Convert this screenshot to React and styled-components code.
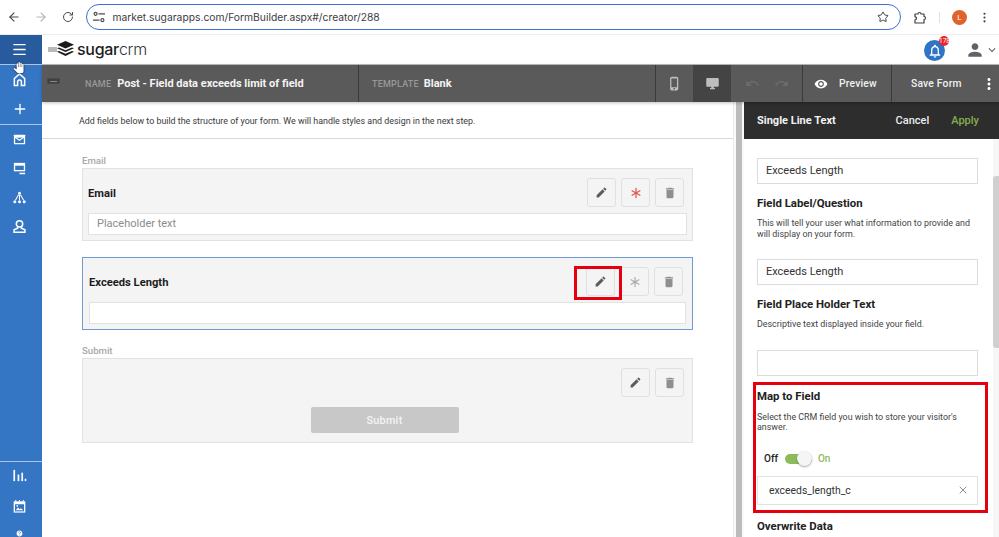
import styled, { createGlobalStyle } from "styled-components";
import { ArrowLeft, ArrowRight, RotateCw, Star, MoreVertical, Plus, X, Asterisk, Menu } from "lucide-react";
import {
  MdEdit,
  MdDelete,
  MdVisibility,
  MdUndo,
  MdRedo,
  MdPhoneIphone,
  MdDesktopWindows,
  MdOutlineNotifications,
  MdPerson,
  MdExpandMore,
  MdMoreVert,
  MdHelp,
  MdPanTool,
} from "react-icons/md";

const Global = createGlobalStyle`
  html, body { margin: 0; padding: 0; background: #fff; overflow: hidden; }
  * { box-sizing: border-box; }
  body { font-family: Roboto, "Liberation Sans", sans-serif; color: #222; }
`;

const Page = styled.div`
  width: 999px;
  height: 537px;
  display: flex;
  flex-direction: column;
  overflow: hidden;
  position: relative;
`;

/* browser chrome */
const BrowserBar = styled.div`
  height: 35px;
  flex: none;
  display: flex;
  align-items: center;
  background: #fff;
  border-bottom: 1px solid #ececec;
`;

const NavBtn = styled.div`
  width: 27px;
  display: flex;
  justify-content: center;
  color: ${({ $dim }) => ($dim ? "#b4b8bd" : "#4a4d52")};
`;

const UrlBar = styled.div`
  width: 815px;
  height: 26px;
  margin-left: 5px;
  border: 1.5px solid #3b6fd0;
  border-radius: 13px;
  display: flex;
  align-items: center;
  padding: 0 11px 0 5px;
  gap: 6.5px;
  font-family: Inter, Roboto, sans-serif;
  font-size: 10.3px;
  color: #3c4043;
`;

const UrlText = styled.span`
  flex: 1;
`;

const BrowserTools = styled.div`
  flex: 1;
  display: flex;
  align-items: center;
  padding-left: 13px;
  color: #3c4043;
`;

const Divider = styled.div`
  width: 1px;
  height: 11px;
  background: #d6e2f5;
  margin: 0 12px;
`;

const Avatar = styled.div`
  width: 15px;
  height: 15px;
  border-radius: 50%;
  background: #e0622c;
  color: #fff;
  font-size: 8px;
  display: flex;
  align-items: center;
  justify-content: center;
  margin-right: 11px;
`;

/* app */
const Shell = styled.div`
  flex: 1;
  display: flex;
  min-height: 0;
`;

const SideNav = styled.nav`
  width: 42px;
  flex: none;
  background: #3476c4;
  display: flex;
  flex-direction: column;
  color: #fff;
`;

const SideTop = styled.div`
  height: 30px;
  flex: none;
  background: #275b9e;
  border-bottom: 1px solid #a9c6ea;
  padding-right: 3px;
  display: flex;
  align-items: center;
  justify-content: center;
`;

const SideGroup = styled.div`
  display: flex;
  flex-direction: column;
  align-items: center;
  flex: none;
  padding: ${({ $top }) => $top || 0}px 3px 0 0;
  height: ${({ $h }) => $h}px;
  border-top: ${({ $line }) => ($line ? "1px solid #a9c6ea" : "none")};
  gap: ${({ $gap }) => $gap || 0}px;
`;

const SideIcon = styled.svg`
  width: 15px;
  height: 15px;
  flex: none;
  fill: none;
  stroke: #fff;
  stroke-width: 1.6;
`;

const Cursor = styled.div`
  position: absolute;
  left: 13px;
  top: 62px;
  color: #fff;
  filter: drop-shadow(0 0 1px #111);
  line-height: 0;
`;

const Main = styled.div`
  flex: 1;
  min-width: 0;
  display: flex;
  flex-direction: column;
`;

const TopHeader = styled.header`
  height: 30px;
  flex: none;
  display: flex;
  align-items: center;
  padding: 0 0 0 6px;
  background: #fff;
  border-bottom: 1px solid #bdbdbd;
`;

const LogoWrap = styled.div`
  display: flex;
  align-items: center;
  flex: 1;
`;

const LogoTag = styled.span`
  width: 9px;
  height: 5px;
  background: #b9b9b9;
  margin-right: -1px;
`;

const LogoText = styled.span`
  font-family: Inter, Roboto, sans-serif;
  font-size: 16px;
  font-weight: 500;
  letter-spacing: -0.3px;
  color: #1d1d1d;
  margin-left: 2px;
  margin-top: -2px;
`;

const LogoLight = styled.span`
  font-weight: 300;
  color: #333;
`;

const Bell = styled.div`
  position: relative;
  width: 21px;
  height: 21px;
  border-radius: 50%;
  background: #2f74c6;
  color: #fff;
  display: flex;
  align-items: center;
  justify-content: center;
  margin-right: 20px;
  margin-top: 2px;
`;

const BellBadge = styled.span`
  position: absolute;
  top: -4px;
  right: -4px;
  width: 10px;
  height: 10px;
  border-radius: 50%;
  background: #e8262a;
  color: #fff;
  font-size: 6.5px;
  line-height: 10px;
  text-align: center;
  overflow: hidden;
`;

const Toolbar = styled.div`
  height: 37px;
  flex: none;
  background: #5a5a5a;
  display: flex;
  align-items: stretch;
  color: #fff;
  box-shadow: 0 1px 3px rgba(0, 0, 0, 0.25);
  position: relative;
  z-index: 2;
`;

const ToolLead = styled.div`
  width: 43px;
  flex: none;
  padding: 13px 0 0 5px;
`;

const MiniBar = styled.div`
  width: 13px;
  height: 6px;
  background: #3f3f3f;
  border: 1px solid #4a4a4a;
  display: flex;
  align-items: center;
  justify-content: center;

  &::after {
    content: "";
    width: 7px;
    height: 1px;
    background: #8a8a8a;
  }
`;

const ToolSection = styled.div`
  display: flex;
  align-items: center;
  gap: ${({ $gap }) => $gap || 0}px;
  width: ${({ $w }) => ($w ? `${$w}px` : "auto")};
  flex: ${({ $grow }) => ($grow ? 1 : "none")};
  justify-content: ${({ $center }) => ($center ? "center" : "flex-start")};
  padding-left: ${({ $pl }) => $pl || 0}px;
  border-right: ${({ $line }) => ($line ? "1px solid #3a3a3a" : "none")};
  background: ${({ $active }) => ($active ? "#444" : "transparent")};
  color: ${({ $muted }) => ($muted ? "#bdbdbd" : "#fff")};
`;

const ToolKey = styled.span`
  font-size: 9px;
  font-weight: 500;
  letter-spacing: 0.2px;
  color: #989898;
`;

const ToolValue = styled.span`
  font-size: 11px;
  font-weight: 700;
  color: #f4f4f4;
`;

const ToolLabel = styled.span`
  font-size: 10.3px;
  font-weight: 500;
  letter-spacing: 0.2px;
  color: #f0f0f0;
`;

const Workspace = styled.div`
  flex: 1;
  min-height: 0;
  display: flex;
`;

const Canvas = styled.section`
  flex: 1;
  min-width: 0;
  background: #fff;
`;

const Intro = styled.p`
  margin: 0;
  height: 37px;
  padding: 13px 0 0 37px;
  font-size: 8.9px;
  line-height: 12px;
  color: #3a3a3a;
  border-bottom: 1px solid #d8d8d8;
`;

const Fields = styled.div`
  padding: 16px 0 0 40px;
  width: 651px;
  display: flex;
  flex-direction: column;
`;

const FieldCaption = styled.div`
  font-size: 9.6px;
  font-weight: 500;
  color: #a8a8a8;
  height: 13px;
  line-height: 11px;
`;

const FieldBox = styled.div`
  position: relative;
  height: ${({ $h }) => $h}px;
  margin-bottom: ${({ $mb }) => $mb || 0}px;
  padding: 0 ${({ $selected }) => ($selected ? 6 : 5)}px;
  background: #f4f4f4;
  border: ${({ $selected }) => ($selected ? "1.5px solid #6f9bd1" : "1.5px solid #e2e2e2")};
  display: flex;
  flex-direction: column;
`;

const FieldHead = styled.div`
  height: 44px;
  padding-top: 3px;
  display: flex;
  align-items: center;
  justify-content: space-between;
  flex: none;
`;

const FieldTitle = styled.span`
  font-size: 11.2px;
  font-weight: 700;
  color: #1c1c1c;
  margin-top: 2px;
`;

const FieldActions = styled.div`
  display: flex;
  gap: 5px;
  padding-right: 3px;
  margin-left: auto;
`;

const ActionBtn = styled.div`
  position: relative;
  width: 29px;
  height: 29px;
  border: 1.5px solid #e0e0e0;
  border-radius: 3px;
  background: #f4f4f4;
  display: flex;
  align-items: center;
  justify-content: center;
  color: ${({ $color }) => $color || "#5c5c5c"};
`;

const FieldInput = styled.div`
  height: 22px;
  background: #fff;
  border: 1.5px solid #e2e2e2;
  font-size: 11px;
  line-height: 20px;
  padding-left: 8px;
  color: #8c8c8c;
`;

const SubmitRow = styled.div`
  display: flex;
  justify-content: center;
  margin-top: 4px;
  padding-right: 6px;
`;

const SubmitBtn = styled.div`
  width: 148px;
  height: 26px;
  border-radius: 2px;
  background: #c8c8c8;
  color: #f4f4f4;
  font-size: 10.8px;
  font-weight: 500;
  letter-spacing: 0.3px;
  display: flex;
  align-items: center;
  justify-content: center;
`;

const RedFrame = styled.div`
  position: absolute;
  z-index: 1;
  border: 3px solid #e6000f;
  pointer-events: none;
  inset: ${({ $inset }) => $inset};
`;

const CanvasScroll = styled.div`
  width: 11px;
  flex: none;
  background: #fafafa;
  border-left: 1px solid #ececec;
  padding-left: 2px;
`;

const CanvasThumb = styled.div`
  width: 6px;
  height: 100%;
  background: #bcbcbc;
`;

const Panel = styled.aside`
  width: 255px;
  flex: none;
  display: flex;
  flex-direction: column;
  background: #fff;
`;

const PanelHead = styled.div`
  height: 37px;
  flex: none;
  background: #2d2d2d;
  display: flex;
  align-items: center;
  padding: 0 20px 0 13px;
  color: #f2f2f2;
`;

const PanelTitle = styled.span`
  font-size: 11px;
  font-weight: 700;
  flex: 1;
`;

const PanelAction = styled.span`
  font-size: 11px;
  font-weight: 500;
  margin-left: ${({ $ml }) => $ml || 0}px;
  color: ${({ $green }) => ($green ? "#85ad4e" : "#ececec")};
`;

const PanelBody = styled.div`
  flex: 1;
  min-height: 0;
  display: flex;
`;

const PanelForm = styled.div`
  flex: 1;
  padding: 19px 15px 0 13px;
  display: flex;
  flex-direction: column;
`;

const PanelScroll = styled.div`
  width: 6px;
  flex: none;
  background: #f6f6f6;
  padding-top: 37px;
`;

const PanelThumb = styled.div`
  width: 6px;
  height: 172px;
  background: #d0d0d0;
  border-radius: 3px 0 0 3px;
`;

const TextField = styled.div`
  height: 26px;
  flex: none;
  border: 1px solid #dcdcdc;
  font-size: 11px;
  line-height: 24px;
  padding-left: 8px;
  color: #333;
`;

const PanelLabel = styled.div`
  font-size: 11.4px;
  font-weight: 700;
  color: #222;
  line-height: 14px;
  margin-top: ${({ $mt }) => $mt || 12}px;
`;

const PanelHint = styled.p`
  margin: ${({ $mt }) => $mt || 8}px 0 ${({ $mb }) => $mb || 0}px;
  font-size: 8.9px;
  line-height: 10.5px;
  color: #444;
`;

const MapSection = styled.div`
  position: relative;
  margin-top: 12px;
  display: flex;
  flex-direction: column;
`;

const ToggleRow = styled.div`
  display: flex;
  align-items: center;
  margin: 17px 0 8px 7px;
  height: 18px;
  font-size: 10px;
  font-weight: 500;
`;

const Track = styled.div`
  position: relative;
  width: 27px;
  height: 10px;
  border-radius: 5px;
  background: #8dbb5a;
  margin: 0 6px 0 7px;
`;

const Knob = styled.div`
  position: absolute;
  right: 0;
  top: -3px;
  width: 15px;
  height: 15px;
  border-radius: 50%;
  background: #f5f5f5;
  box-shadow: 0 1px 2px rgba(0, 0, 0, 0.35);
`;

const OnText = styled.span`
  color: #8dbb5a;
`;

const SelectField = styled.div`
  height: 29px;
  flex: none;
  border: 1px solid #e2e2e2;
  display: flex;
  align-items: center;
  justify-content: space-between;
  padding: 0 8px 0 11px;
  font-size: 10.4px;
  color: #333;
`;

function HomeIcon() {
  return (
    <SideIcon viewBox="0 0 16 16">
      <path d="M2.5 14.5V7L8 2l5.5 5v7.5H10V10.5a2 2 0 0 0-4 0v4z" />
    </SideIcon>
  );
}

function MailIcon() {
  return (
    <SideIcon viewBox="0 0 16 16">
      <rect x="2" y="3" width="12" height="10" rx="0.5" fill="#fff" stroke="none" />
      <rect x="3.4" y="6" width="9.2" height="5.8" fill="#3476c4" stroke="none" />
      <path d="M3 5.4l5 3.4 5-3.4" stroke="#fff" strokeWidth="1.2" />
    </SideIcon>
  );
}

function ScreenIcon() {
  return (
    <SideIcon viewBox="0 0 16 16">
      <rect x="2" y="2" width="12" height="9" fill="#fff" stroke="none" />
      <rect x="3.4" y="5" width="9.2" height="4.6" fill="#3476c4" stroke="none" />
      <rect x="8" y="12.5" width="6" height="1.6" fill="#fff" stroke="none" />
    </SideIcon>
  );
}

function TreeIcon() {
  return (
    <SideIcon viewBox="0 0 16 16">
      <circle cx="8" cy="3.5" r="1.6" fill="#fff" stroke="none" />
      <circle cx="3" cy="12.5" r="1.6" fill="#fff" stroke="none" />
      <circle cx="8" cy="12.5" r="1.6" fill="#fff" stroke="none" />
      <circle cx="13" cy="12.5" r="1.6" fill="#fff" stroke="none" />
      <path d="M7 5L3.6 11M8 5v6M9 5l3.4 6" strokeWidth="1.1" />
    </SideIcon>
  );
}

function UserIcon() {
  return (
    <SideIcon viewBox="0 0 16 16">
      <circle cx="8" cy="5.2" r="3.4" />
      <path d="M6 8.5v1.4L2.2 11.4v2.8h11.6v-2.8L10 9.9V8.5" />
    </SideIcon>
  );
}

function BarsIcon() {
  return (
    <SideIcon viewBox="0 0 16 16">
      <rect x="1.5" y="2" width="1.8" height="12" fill="#fff" stroke="none" />
      <rect x="6" y="7" width="1.8" height="7" fill="#fff" stroke="none" />
      <rect x="10" y="5" width="1.8" height="9" fill="#fff" stroke="none" />
      <rect x="13.6" y="11.5" width="1.6" height="2.5" fill="#fff" stroke="none" />
    </SideIcon>
  );
}

function CalendarIcon() {
  return (
    <SideIcon viewBox="0 0 16 16">
      <rect x="1.8" y="2.5" width="12.4" height="12" fill="#fff" stroke="none" />
      <rect x="3.2" y="5.6" width="9.6" height="7.6" fill="#3476c4" stroke="none" />
      <path d="M4 2.6V1M8 2.6V1M12 2.6V1" strokeWidth="1.1" />
      <path d="M4 12l2.4-3 1.8 2 1.3-1.2 2.5 2.2z" fill="#fff" stroke="none" />
      <circle cx="5.6" cy="7.4" r="0.9" fill="#fff" stroke="none" />
    </SideIcon>
  );
}

function SiteInfoIcon() {
  return (
    <svg width="14" height="14" viewBox="0 0 14 14" fill="none" stroke="#4a4d52" strokeWidth="1.2">
      <circle cx="3.6" cy="3.8" r="1.5" />
      <path d="M6.5 3.8H13M1 10.2h6.5" />
      <circle cx="10.4" cy="10.2" r="1.5" />
    </svg>
  );
}

function ExtensionIcon() {
  return (
    <svg width="13" height="13" viewBox="0 0 13 13" fill="none" stroke="#3c4043" strokeWidth="1.2" strokeLinejoin="round">
      <path d="M1 3h3a1.500 1.500 0 0 1 3 0h3v2.500a1.500 1.500 0 0 1 0 3V12H1V8.800a1.500 1.500 0 0 0 0-3z" />
    </svg>
  );
}

function LogoMark() {
  return (
    <svg width="19" height="17" viewBox="0 0 19 17" fill="#1b1b1b">
      <path d="M9.5 0L18 3.8 9.5 7.6 1 3.8z" />
      <path d="M3 6.400l6.500 2.900L16 6.400l2 .9-8.500 3.800L1 7.300z" />
      <path d="M3 9.900l6.500 2.900L16 9.900l2 .9-8.500 4.200L1 10.800z" />
    </svg>
  );
}

export default function App() {
  return (
    <Page>
      <Global />
      <BrowserBar>
        <NavBtn><ArrowLeft size={14} /></NavBtn>
        <NavBtn $dim><ArrowRight size={14} /></NavBtn>
        <NavBtn><RotateCw size={12} /></NavBtn>
        <UrlBar>
          <SiteInfoIcon />
          <UrlText>market.sugarapps.com/FormBuilder.aspx#/creator/288</UrlText>
          <Star size={12} color="#3c4043" />
        </UrlBar>
        <BrowserTools>
          <ExtensionIcon />
          <Divider />
          <Avatar>L</Avatar>
          <MoreVertical size={13} />
        </BrowserTools>
      </BrowserBar>

      <Shell>
        <SideNav>
          <SideTop><Menu size={17} strokeWidth={1.8} /></SideTop>
          <SideGroup $h={59} $top={7} $gap={14}>
            <HomeIcon />
            <Plus size={16} strokeWidth={2} />
          </SideGroup>
          <SideGroup $line $h={337} $top={7} $gap={14}>
            <MailIcon />
            <ScreenIcon />
            <TreeIcon />
            <UserIcon />
          </SideGroup>
          <SideGroup $line $h={76} $top={6} $gap={16}>
            <BarsIcon />
            <CalendarIcon />
            <MdHelp size={15} />
          </SideGroup>
        </SideNav>

        <Main>
          <TopHeader>
            <LogoWrap>
              <LogoTag />
              <LogoMark />
              <LogoText>sugar<LogoLight>crm</LogoLight></LogoText>
            </LogoWrap>
            <Bell>
              <MdOutlineNotifications size={16} />
              <BellBadge>178</BellBadge>
            </Bell>
            <MdPerson size={20} color="#5f6368" />
            <MdExpandMore size={14} color="#5f6368" />
          </TopHeader>

          <Toolbar>
            <ToolLead><MiniBar /></ToolLead>
            <ToolSection $w={274} $line $gap={6}>
              <ToolKey>NAME</ToolKey>
              <ToolValue>Post - Field data exceeds limit of field</ToolValue>
            </ToolSection>
            <ToolSection $grow $line $pl={13} $gap={5}>
              <ToolKey>TEMPLATE</ToolKey>
              <ToolValue>Blank</ToolValue>
            </ToolSection>
            <ToolSection $w={37} $center $muted><MdPhoneIphone size={15} /></ToolSection>
            <ToolSection $w={38} $center $active $muted><MdDesktopWindows size={15} /></ToolSection>
            <ToolSection $w={72} $center $gap={14} $line>
              <MdUndo size={15} color="#6c6c6c" />
              <MdRedo size={15} color="#6c6c6c" />
            </ToolSection>
            <ToolSection $w={89} $line $pl={11} $gap={11}>
              <MdVisibility size={14} />
              <ToolLabel>Preview</ToolLabel>
            </ToolSection>
            <ToolSection $w={107} $pl={19} $gap={18}>
              <ToolLabel>Save Form</ToolLabel>
              <MdMoreVert size={18} />
            </ToolSection>
          </Toolbar>

          <Workspace>
            <Canvas>
              <Intro>Add fields below to build the structure of your form. We will handle styles and design in the next step.</Intro>
              <Fields>
                <FieldCaption>Email</FieldCaption>
                <FieldBox $h={73} $mb={16}>
                  <FieldHead>
                    <FieldTitle>Email</FieldTitle>
                    <FieldActions>
                      <ActionBtn><MdEdit size={13} /></ActionBtn>
                      <ActionBtn $color="#e2574c"><Asterisk size={18} strokeWidth={1.7} /></ActionBtn>
                      <ActionBtn $color="#8f8f8f"><MdDelete size={14} /></ActionBtn>
                    </FieldActions>
                  </FieldHead>
                  <FieldInput>Placeholder text</FieldInput>
                </FieldBox>

                <FieldBox $h={73} $mb={15} $selected>
                  <FieldHead>
                    <FieldTitle>Exceeds Length</FieldTitle>
                    <FieldActions>
                      <ActionBtn>
                        <MdEdit size={13} />
                        <RedFrame $inset="-2.5px -7.5px -4.5px -13.5px" />
                      </ActionBtn>
                      <ActionBtn $color="#a8a8a8"><Asterisk size={18} strokeWidth={1.5} /></ActionBtn>
                      <ActionBtn $color="#8f8f8f"><MdDelete size={14} /></ActionBtn>
                    </FieldActions>
                  </FieldHead>
                  <FieldInput />
                </FieldBox>

                <FieldCaption>Submit</FieldCaption>
                <FieldBox $h={85}>
                  <FieldHead>
                    <FieldActions>
                      <ActionBtn><MdEdit size={13} /></ActionBtn>
                      <ActionBtn $color="#8f8f8f"><MdDelete size={14} /></ActionBtn>
                    </FieldActions>
                  </FieldHead>
                  <SubmitRow><SubmitBtn>Submit</SubmitBtn></SubmitRow>
                </FieldBox>
              </Fields>
            </Canvas>
            <CanvasScroll><CanvasThumb /></CanvasScroll>

            <Panel>
              <PanelHead>
                <PanelTitle>Single Line Text</PanelTitle>
                <PanelAction>Cancel</PanelAction>
                <PanelAction $ml={22} $green>Apply</PanelAction>
              </PanelHead>
              <PanelBody>
                <PanelForm>
                  <TextField>Exceeds Length</TextField>
                  <PanelLabel>Field Label/Question</PanelLabel>
                  <PanelHint $mb={20}>This will tell your user what information to provide and will display on your form.</PanelHint>
                  <TextField>Exceeds Length</TextField>
                  <PanelLabel>Field Place Holder Text</PanelLabel>
                  <PanelHint $mb={20}>Descriptive text displayed inside your field.</PanelHint>
                  <TextField />
                  <MapSection>
                    <PanelLabel $mt={1}>Map to Field</PanelLabel>
                    <PanelHint $mt={9}>Select the CRM field you wish to store your visitor's answer.</PanelHint>
                    <ToggleRow>
                      Off
                      <Track><Knob /></Track>
                      <OnText>On</OnText>
                    </ToggleRow>
                    <SelectField>
                      exceeds_length_c
                      <X size={12} color="#666" strokeWidth={1.5} />
                    </SelectField>
                    <RedFrame $inset="-6px -10px -8px -4px" />
                  </MapSection>
                  <PanelLabel $mt={14}>Overwrite Data</PanelLabel>
                </PanelForm>
                <PanelScroll><PanelThumb /></PanelScroll>
              </PanelBody>
            </Panel>
          </Workspace>
        </Main>
      </Shell>

      <Cursor><MdPanTool size={11} /></Cursor>
    </Page>
  );
}
